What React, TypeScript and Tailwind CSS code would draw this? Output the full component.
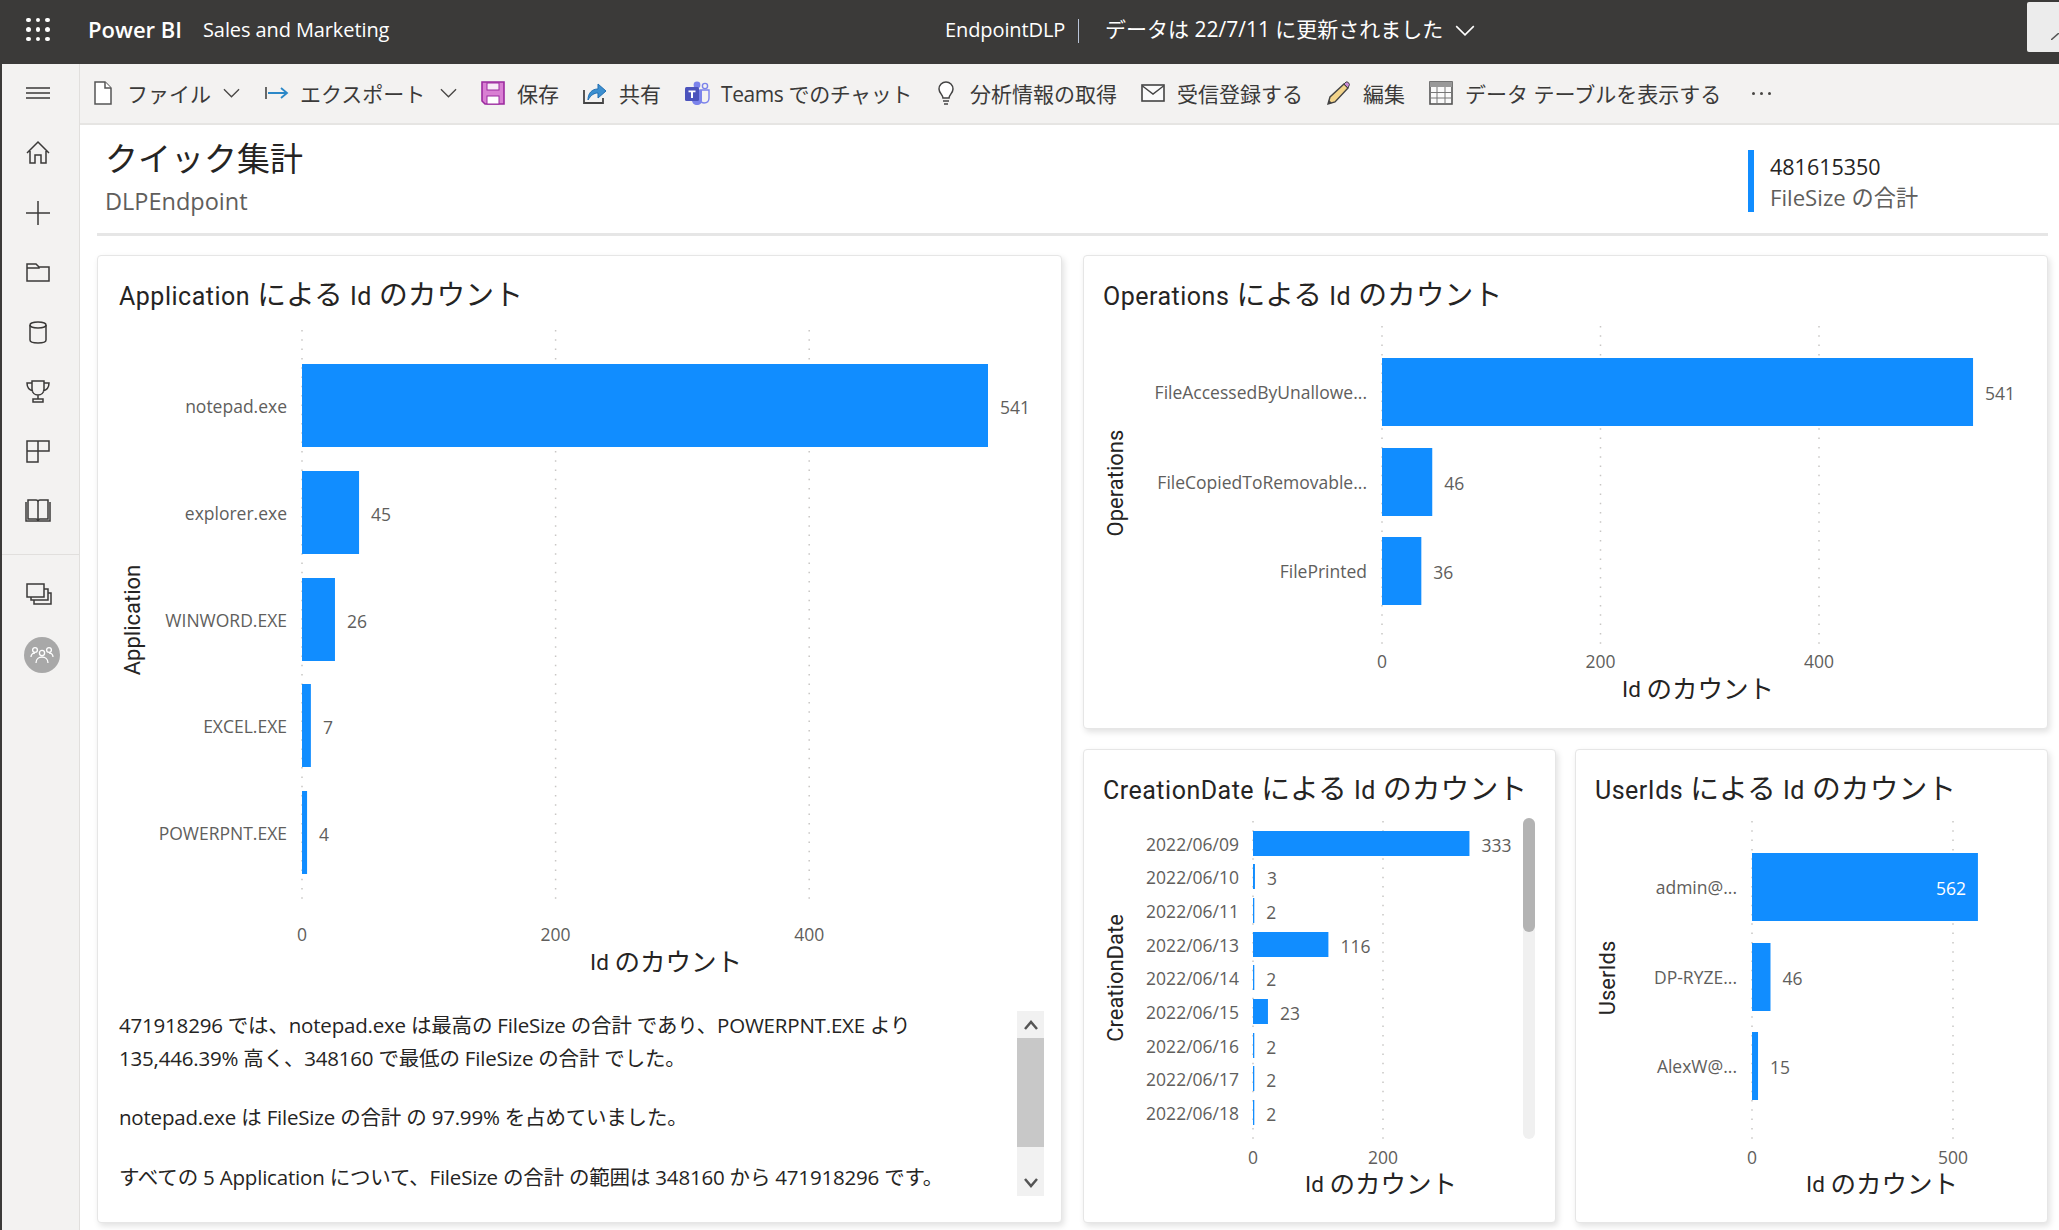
import React from "react";

const BLUE = "#118dff";

type Bar = { label: string; value: number; y: number; inside?: boolean };
type ChartProps = {
  ox: number; oy: number; w: number; h: number; zero: number; scale: number;
  ticks: number[]; gridTop: number; gridBottom: number; tickY: number;
  bars: Bar[]; barH: number; labelRight: number;
  yTitle: string; yTitleX: number; yTitleY: number; axisX: number; axisY: number;
};

function Chart(p: ChartProps) {
  const X = (v: number) => p.zero - p.ox + v * p.scale;
  const Y = (v: number) => v - p.oy;
  return (
    <svg width={p.w} height={p.h} className="block shrink-0">
      {p.ticks.map((t) => (
        <g key={t}>
          <line x1={X(t)} x2={X(t)} y1={Y(p.gridTop)} y2={Y(p.gridBottom)} stroke="#c8c6c4" strokeWidth={1.5} strokeDasharray="1.5 7.8" />
          <text x={X(t)} y={Y(p.tickY)} textAnchor="middle" dominantBaseline="central" className="fill-[#605e5c] text-[17.5px]">{t}</text>
        </g>
      ))}
      {p.bars.map((b) => (
        <g key={b.label}>
          <rect x={X(0)} y={Y(b.y)} width={b.value * p.scale} height={p.barH} fill={BLUE} />
          <text x={p.labelRight - p.ox} y={Y(b.y + p.barH / 2)} textAnchor="end" dominantBaseline="central" className="fill-[#605e5c] text-[17.5px]">{b.label}</text>
          {b.inside ? (
            <text x={X(b.value) - 12} y={Y(b.y + p.barH / 2 + 1)} textAnchor="end" dominantBaseline="central" className="fill-white text-[17.5px]">{b.value}</text>
          ) : (
            <text x={X(b.value) + 12} y={Y(b.y + p.barH / 2 + 1)} dominantBaseline="central" className="fill-[#605e5c] text-[17.5px]">{b.value}</text>
          )}
        </g>
      ))}
      <text transform={`translate(${p.yTitleX - p.ox} ${Y(p.yTitleY)}) rotate(-90)`} textAnchor="middle" dominantBaseline="central" className="fill-[#252423] text-[22px] [font-family:'Roboto','Noto_Sans_CJK_JP',sans-serif]">{p.yTitle}</text>
      <text x={p.axisX - p.ox} y={Y(p.axisY)} textAnchor="middle" dominantBaseline="central" className="fill-[#252423] text-[25.5px] [font-family:'Roboto','Noto_Sans_CJK_JP',sans-serif]">
        <tspan className="text-[22.5px]">Id </tspan>のカウント
      </text>
    </svg>
  );
}

function Title({ text }: { text: string }) {
  const parts = text.split(/([A-Za-z]+)/).filter(Boolean);
  return (
    <>
      {parts.map((s, i) => /[A-Za-z]/.test(s)
        ? <span key={i} className="text-[25px] tracking-[0.5px]">{s}</span>
        : <span key={i}>{s}</span>)}
    </>
  );
}

function Card({ title, pl, hTitle, className, children }: { title: string; pl: string; hTitle: string; className?: string; children: React.ReactNode }) {
  return (
    <div className={`bg-white rounded-[4px] border border-[#e6e6e6] shadow-[2px_3px_6px_rgba(0,0,0,0.12)] flex flex-col overflow-hidden ${className ?? ""}`}>
      <div className={`${hTitle} shrink-0 pt-[22px] leading-[34px] text-[28.8px] text-[#252423] whitespace-nowrap [font-family:'Roboto','Noto_Sans_CJK_JP',sans-serif] ${pl}`}><Title text={title} /></div>
      {children}
    </div>
  );
}

const S = { fill: "none", stroke: "#3b3a39", strokeWidth: 1.5 } as const;

function SideIcon({ children }: { children: React.ReactNode }) {
  return <div className="h-[59.5px] w-full flex items-center justify-center pr-[6px]"><svg width="26" height="26" viewBox="0 0 26 26">{children}</svg></div>;
}

function Sidebar() {
  return (
    <div className="w-[80px] shrink-0 border-l-2 border-r border-l-[#3b3a39] border-r-[#e1dfdd] bg-[#f3f2f1] flex flex-col">
      <SideIcon><g {...S}><path d="M1 7h24M1 12h24M1 17h24" /></g></SideIcon>
      <SideIcon><g {...S}><path d="M2 13 13 2l11 11M5 11v12h5v-8h6v8h5V11" /></g></SideIcon>
      <SideIcon><g {...S}><path d="M1 13h24M13 1v24" /></g></SideIcon>
      <SideIcon><g {...S}><path d="M2 5h9l3 3h10v14H2zM2 9h12l0-1" /></g></SideIcon>
      <SideIcon><g {...S}><ellipse cx="13" cy="6" rx="8" ry="3" /><path d="M5 6v15c0 2 3 3 8 3s8-1 8-3V6" /></g></SideIcon>
      <SideIcon><g {...S}><path d="M7 3h12v8c0 4-3 6-6 6s-6-2-6-6zM7 5H2c0 5 2 7 6 8M19 5h5c0 5-2 7-6 8M13 17v4M8 24h10v-3H8z" /></g></SideIcon>
      <SideIcon><g {...S}><path d="M2 3h22v10H13V24H2zM13 3v10M2 13h11" /></g></SideIcon>
      <SideIcon><g {...S}><path d="M3 3h8c1 0 2 1 2 2 0-1 1-2 2-2h8v19h-8c-1 0-2 1-2 1s-1-1-2-1H3zM13 5v18M1 5v19h24V5" /></g></SideIcon>
      <div className="h-[15px] border-b border-[#e1dfdd]" />
      <div className="h-[76px] flex items-center justify-center pt-[2px] pr-[3px]">
        <svg width="26" height="24" viewBox="0 0 26 24"><g {...S}><rect x="1" y="2" width="17" height="13" /><path d="M18 7h4v11H5v-3M22 11h3v11H8v-4" /></g></svg>
      </div>
      <div className="h-[46px] flex justify-center pl-[2px] pt-[6px]">
        <div className="w-[36px] h-[36px] rounded-full bg-[#a8a8a8] flex items-center justify-center">
          <svg width="24" height="18" viewBox="0 0 24 18"><g fill="none" stroke="#fff" strokeWidth="1.3"><circle cx="5" cy="4" r="2.4" /><circle cx="19" cy="4" r="2.4" /><circle cx="12" cy="7" r="2.6" /><path d="M1 11c0-3 2-4 4-4M23 11c0-3-2-4-4-4M6 17c0-4 3-6 6-6s6 2 6 6" /></g></svg>
        </div>
      </div>
    </div>
  );
}

const Chevron = ({ cls, color = "#484644" }: { cls: string; color?: string }) => (
  <svg viewBox="0 0 18 10" className={cls}><path d="M1 1l8 8 8-8" fill="none" stroke={color} strokeWidth="1.4" /></svg>
);

function Tool({ icon, label, w, cls }: { icon: React.ReactNode; label: string; w: string; cls?: string }) {
  return (
    <div className={`flex items-center ${cls ?? "gap-[12px]"}`}>
      {icon}
      <span className={`${w} whitespace-nowrap text-[21px] leading-[30px] pt-[2px] text-[#3b3a39]`}>{label}</span>
    </div>
  );
}

function Toolbar() {
  return (
    <div className="h-[61px] shrink-0 bg-[#f3f2f1] border-b-2 border-[#e6e5e3] flex items-center pl-[14px] pb-[1px]">
      <Tool w="w-[82px]" cls="gap-[15px]" label="ファイル" icon={
        <svg width="18" height="24" viewBox="0 0 18 24"><path d="M1 1h10l6 6v16H1z" fill="#fff" stroke="#555" strokeWidth="1.5" /><path d="M11 1v6h6" fill="#fff" stroke="#555" strokeWidth="1.5" /></svg>} />
      <Chevron cls="w-[17px] h-[10px] ml-[14px] mr-[25px]" />
      <Tool w="w-[126px]" cls="gap-[11px]" label="エクスポート" icon={
        <svg width="24" height="14" viewBox="0 0 24 14"><path d="M1 1v12" stroke="#444" strokeWidth="1.6" /><path d="M3 7h19M16 2l6 5-6 5" fill="none" stroke="#2b88c8" strokeWidth="1.8" /></svg>} />
      <Chevron cls="w-[17px] h-[10px] ml-[14px] mr-[24px]" />
      <Tool w="w-[41px]" label="保存" icon={
        <svg width="24" height="24" viewBox="0 0 24 24"><path d="M1 1h22v22H4l-3-3z" fill="#d97fd3" stroke="#9b2a9f" strokeWidth="1.6" /><rect x="6" y="2" width="12" height="7" fill="#f8e9f7" stroke="#9b2a9f" strokeWidth="1" /><rect x="6" y="15" width="12" height="8" fill="#fff" stroke="#9b2a9f" strokeWidth="1" /></svg>} />
      <div className="w-[25px]" />
      <Tool w="w-[41px]" label="共有" icon={
        <svg width="24" height="24" viewBox="0 0 24 24"><path d="M1 9v13h19v-5" fill="none" stroke="#444" strokeWidth="1.8" /><path d="M5 19c0-7 4-11 10-11V3l8 7-8 7v-5c-4 0-7 2-10 7z" fill="#3c8fd0" stroke="#1f6fb2" strokeWidth="1" /></svg>} />
      <div className="w-[25px]" />
      <Tool w="w-[189px] tracking-[-0.4px]" cls="gap-[11px]" label="Teams でのチャット" icon={
        <svg width="25" height="24" viewBox="0 0 25 24"><circle cx="12" cy="4" r="3.4" fill="#7b83eb" /><circle cx="20" cy="5" r="2.6" fill="none" stroke="#7b83eb" strokeWidth="1.4" /><path d="M15 9h9v8c0 3-2 5-5 5-2 0-3-1-4-2z" fill="none" stroke="#7b83eb" strokeWidth="1.4" /><path d="M7 9h10v10c0 3-2 5-5 5-3 0-5-2-5-5z" fill="#7b83eb" /><rect x="0" y="6" width="14" height="14" rx="1.5" fill="#4b53bc" /><path d="M3.5 9.500h7v1.800H8V17H6v-5.700H3.500z" fill="#fff" /></svg>} />
      <div className="w-[24px]" />
      <Tool w="w-[147px]" label="分析情報の取得" icon={
        <svg width="24" height="24" viewBox="0 0 24 24"><path d="M9 17c0-3-4-5-4-9a7 7 0 0 1 14 0c0 4-4 6-4 9z" fill="#fff" stroke="#444" strokeWidth="1.5" /><path d="M9 20h6M10 23h4" stroke="#444" strokeWidth="1.6" /></svg>} />
      <div className="w-[24px]" />
      <Tool w="w-[125px]" label="受信登録する" icon={
        <svg width="24" height="18" viewBox="0 0 24 18"><rect x="1" y="1" width="22" height="16" fill="#fafafa" stroke="#444" strokeWidth="1.6" /><path d="M1.500 2 12 10 22.500 2" fill="none" stroke="#444" strokeWidth="1.4" /></svg>} />
      <div className="w-[25px]" />
      <Tool w="w-[42px]" label="編集" icon={
        <svg width="24" height="24" viewBox="0 0 24 24"><path d="M1 23l2-7L17 3l4 4L8 21z" fill="#f3d48a" stroke="#444" strokeWidth="1.4" /><path d="M17 3l2-2c1-.5 3 .5 3.500 2.500L21 7z" fill="#c98ad6" stroke="#444" strokeWidth="1" /><path d="M1 23l1-4 3 3z" fill="#444" /></svg>} />
      <div className="w-[24px]" />
      <Tool w="w-[257px]" label="データ テーブルを表示する" icon={
        <svg width="24" height="24" viewBox="0 0 24 24"><rect x="1" y="1" width="22" height="22" fill="#fafafa" stroke="#555" strokeWidth="1.6" /><rect x="1" y="1" width="22" height="5" fill="#999" /><path d="M1 11.500h22M1 17h22M8 6v17M16 6v17" stroke="#777" strokeWidth="1" /></svg>} />
      <div className="ml-[30px] flex gap-[5px] pt-[1px]">
        <span className="w-[3px] h-[3px] rounded-full bg-[#484644]" />
        <span className="w-[3px] h-[3px] rounded-full bg-[#484644]" />
        <span className="w-[3px] h-[3px] rounded-full bg-[#484644]" />
      </div>
    </div>
  );
}

function TopBar() {
  return (
    <div className="h-16 shrink-0 bg-[#3b3a39] flex items-center text-white whitespace-nowrap">
      <div className="ml-[26px] w-[24px] grid grid-cols-3 gap-[5px] mb-[5px]">
        {[0, 1, 2, 3, 4, 5, 6, 7, 8].map((i) => <span key={i} className="w-[4.500px] h-[4.500px] bg-white rounded-full" />)}
      </div>
      <span className="ml-[38px] w-[115px] text-[22px] font-semibold mb-[5px]">Power BI</span>
      <span className="w-[742px] text-[20px] tracking-[-0.1px] mb-[5px]">Sales and Marketing</span>
      <span className="w-[133px] text-[20px] tracking-[-0.1px] mb-[5px]">EndpointDLP</span>
      <span className="h-[24px] w-px bg-[#b9c4d8] mb-[3px]" />
      <span className="ml-[26px] w-[350px] text-[21px] mb-[5px]">データは 22/7/11 に更新されました</span>
      <Chevron cls="w-[20px] h-[11px] mb-[3px]" color="#ffffff" />
      <div className="ml-auto mb-[11px] w-[32px] h-[50px] bg-[#ececec] rounded-l-[2px] flex items-end justify-end pb-[12px]">
        <svg width="8" height="7" viewBox="0 0 8 7"><path d="M0 7 8 0" stroke="#555" strokeWidth="1.5" /></svg>
      </div>
    </div>
  );
}

function Narrative() {
  return (
    <div className="flex h-[185px] pl-[21px] pr-[17px]">
      <div className="flex-1 -mt-[2px] text-[20.5px] leading-[33px] text-[#252423] tracking-[-0.2px] whitespace-nowrap">
        <p>471918296 では、notepad.exe は最高の FileSize の合計 であり、POWERPNT.EXE より</p>
        <p>135,446.39% 高く、348160 で最低の FileSize の合計 でした。</p>
        <p className="mt-[26px]">notepad.exe は FileSize の合計 の 97.99% を占めていました。</p>
        <p className="mt-[27px]">すべての 5 Application について、FileSize の合計 の範囲は 348160 から 471918296 です。</p>
      </div>
      <div className="w-[27px] shrink-0 bg-[#f1f1f1] flex flex-col">
        <div className="h-[27px] flex items-center justify-center"><svg width="14" height="10" viewBox="0 0 14 10"><path d="M1 9l6-7 6 7" fill="none" stroke="#555" strokeWidth="2.500" /></svg></div>
        <div className="h-[109px] bg-[#c8c8c8]" />
        <div className="flex-1 flex items-end justify-center pb-[8px]"><svg width="14" height="10" viewBox="0 0 14 10"><path d="M1 1l6 7 6-7" fill="none" stroke="#555" strokeWidth="2.500" /></svg></div>
      </div>
    </div>
  );
}

export default function App() {
  return (
    <div className="w-full h-[1230px] overflow-hidden flex flex-col bg-white [font-family:'Open_Sans','Noto_Sans_CJK_JP',sans-serif]">
      <TopBar />
      <div className="flex flex-1 min-h-0">
        <Sidebar />
        <div className="flex-1 min-w-0 flex flex-col">
          <Toolbar />
          <div className="h-[108px] shrink-0 flex justify-between pl-[25px]">
            <div className="pt-[13px]">
              <div className="text-[33px] leading-[42px] text-[#252423]">クイック集計</div>
              <div className="text-[23.5px] leading-[32px] text-[#605e5c] mt-[5px]">DLPEndpoint</div>
            </div>
            <div className="w-[311px] mt-[25px] h-[62px] border-l-[6px] border-[#118dff] pl-[16px] shrink-0">
              <div className="text-[21.5px] leading-[31px] pt-[1px] text-[#252423]">481615350</div>
              <div className="text-[22.2px] leading-[31px] text-[#605e5c]">FileSize の合計</div>
            </div>
          </div>
          <div className="h-[3px] shrink-0 bg-[#e6e6e6] ml-[17px] mr-[11px]" />
          <div className="flex gap-[21px] ml-[17px] mr-[11px] mt-[19px] h-[968px]">
            <Card title="Application による Id のカウント" pl="pl-[21px]" hTitle="h-[67px]" className="w-[965px] shrink-0">
              <Chart ox={98} oy={323} w={963} h={688} zero={302} scale={1.268} ticks={[0, 200, 400]} gridTop={330} gridBottom={906} tickY={934}
                barH={83} labelRight={287} yTitle="Application" yTitleX={132} yTitleY={620} axisX={666} axisY={962}
                bars={[
                  { label: "notepad.exe", value: 541, y: 364 },
                  { label: "explorer.exe", value: 45, y: 471 },
                  { label: "WINWORD.EXE", value: 26, y: 578 },
                  { label: "EXCEL.EXE", value: 7, y: 684 },
                  { label: "POWERPNT.EXE", value: 4, y: 791 },
                ]} />
              <Narrative />
            </Card>
            <div className="flex-1 min-w-0 flex flex-col gap-[20px]">
              <Card title="Operations による Id のカウント" pl="pl-[19px]" hTitle="h-[67px]" className="h-[474px] shrink-0">
                <Chart ox={1084} oy={323} w={963} h={405} zero={1382} scale={1.0925} ticks={[0, 200, 400]} gridTop={326} gridBottom={645} tickY={661}
                  barH={68} labelRight={1367} yTitle="Operations" yTitleX={1115} yTitleY={483} axisX={1698} axisY={689}
                  bars={[
                    { label: "FileAccessedByUnallowe...", value: 541, y: 358 },
                    { label: "FileCopiedToRemovable...", value: 46, y: 448 },
                    { label: "FilePrinted", value: 36, y: 537 },
                  ]} />
              </Card>
              <div className="h-[474px] shrink-0 flex gap-[19px]">
                <Card title="CreationDate による Id のカウント" pl="pl-[19px]" hTitle="h-[66px]" className="w-[473px] shrink-0">
                  <div className="flex">
                    <Chart ox={1084} oy={816} w={439} h={405} zero={1253} scale={0.65} ticks={[0, 200]} gridTop={821} gridBottom={1139} tickY={1157}
                      barH={25} labelRight={1239} yTitle="CreationDate" yTitleX={1115} yTitleY={978} axisX={1381} axisY={1184}
                      bars={[
                        { label: "2022/06/09", value: 333, y: 831 },
                        { label: "2022/06/10", value: 3, y: 864 },
                        { label: "2022/06/11", value: 2, y: 898 },
                        { label: "2022/06/13", value: 116, y: 932 },
                        { label: "2022/06/14", value: 2, y: 965 },
                        { label: "2022/06/15", value: 23, y: 999 },
                        { label: "2022/06/16", value: 2, y: 1033 },
                        { label: "2022/06/17", value: 2, y: 1066 },
                        { label: "2022/06/18", value: 2, y: 1100 },
                      ]} />
                    <div className="w-[12px] h-[321px] mt-[2px] rounded-[6px] bg-[#f0f0f0] shrink-0">
                      <div className="h-[114px] rounded-[6px] bg-[#b3b3b3]" />
                    </div>
                  </div>
                </Card>
                <Card title="UserIds による Id のカウント" pl="pl-[19px]" hTitle="h-[66px]" className="flex-1 min-w-0">
                  <Chart ox={1576} oy={816} w={470} h={405} zero={1752} scale={0.402} ticks={[0, 500]} gridTop={821} gridBottom={1139} tickY={1157}
                    barH={68} labelRight={1737} yTitle="UserIds" yTitleX={1607} yTitleY={978} axisX={1882} axisY={1184}
                    bars={[
                      { label: "admin@...", value: 562, y: 853, inside: true },
                      { label: "DP-RYZE...", value: 46, y: 943 },
                      { label: "AlexW@...", value: 15, y: 1032 },
                    ]} />
                </Card>
              </div>
            </div>
          </div>
        </div>
      </div>
    </div>
  );
}
